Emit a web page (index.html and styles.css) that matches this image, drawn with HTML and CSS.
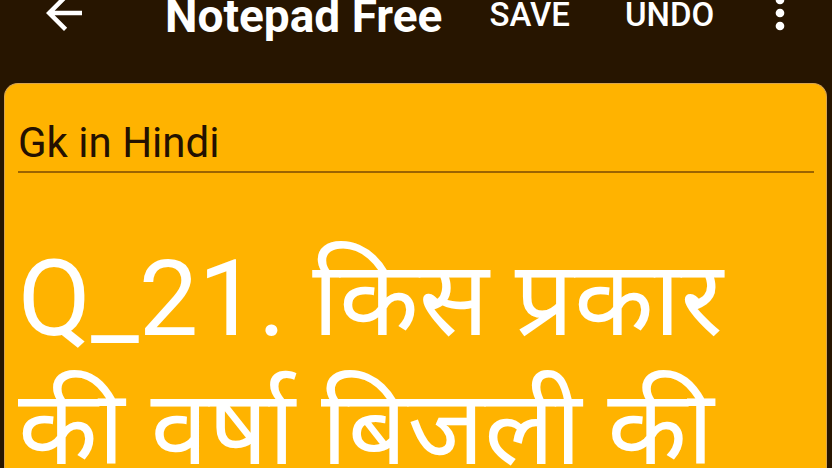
FILE: index.html
```html
<!DOCTYPE html>
<html lang="hi">
<head>
<meta charset="utf-8">
<title>Notepad Free</title>
<link rel="stylesheet" href="styles.css">
</head>
<body>
<header class="toolbar">
  <svg class="icon-back" viewBox="0 0 24 24" width="54" height="54" aria-label="Back">
    <path d="M20 11H7.83l5.59-5.59L12 4l-8 8 8 8 1.41-1.41L7.83 13H20v-2z" fill="#ffffff"/>
  </svg>
  <h1 class="title">Notepad Free</h1>
  <span class="action action-save">SAVE</span>
  <span class="action action-undo">UNDO</span>
  <svg class="icon-more" viewBox="0 0 24 24" width="52" height="52" aria-label="More">
    <circle cx="12" cy="6" r="2" fill="#ffffff"/>
    <circle cx="12" cy="12" r="2" fill="#ffffff"/>
    <circle cx="12" cy="18" r="2" fill="#ffffff"/>
  </svg>
</header>
<main class="card">
  <div class="note-title">Gk in Hindi</div>
  <div class="note-body">Q_21. <span class="hi">किस प्रकार</span><br><span class="hi">की वर्षा बिजली की</span></div>
</main>
</body>
</html>
```
FILE: styles.css
```css
html, body {
  margin: 0;
  padding: 0;
  height: 100%;
  overflow: hidden;
}
body {
  background: #271500;
  font-family: Roboto, "Noto Sans", sans-serif;
}
.toolbar {
  display: flex;
  align-items: center;
  height: 26px;
  padding-left: 37px;
  color: #ffffff;
}
.icon-back {
  flex: none;
  display: block;
}
.title {
  margin: 0 0 0 74px;
  font-size: 46px;
  font-weight: 700;
  line-height: 26px;
  padding-top: 6px;
}
.action {
  font-size: 33px;
  font-weight: 500;
  line-height: 26px;
  padding-top: 4px;
}
.action-save {
  margin-left: 47px;
}
.action-undo {
  margin-left: 55px;
}
.icon-more {
  flex: none;
  display: block;
  margin-left: 40px;
}
.card {
  margin: 57px 5px 0 4px;
  background: #ffb300;
  border: 1px solid #d9a54e;
  border-bottom: none;
  border-radius: 14px 14px 0 0;
  height: 420px;
  padding: 0 12px 0 13px;
}
.note-title {
  margin-top: 30px;
  font-size: 42px;
  line-height: 57px;
  color: #241100;
  border-bottom: 2px solid #9c6400;
}
.note-body {
  margin-top: 62px;
  font-size: 106px;
  line-height: 128px;
  color: #ffffff;
  white-space: nowrap;
}
.hi {
  font-size: 0.98em;
  line-height: 128px;
}
```
